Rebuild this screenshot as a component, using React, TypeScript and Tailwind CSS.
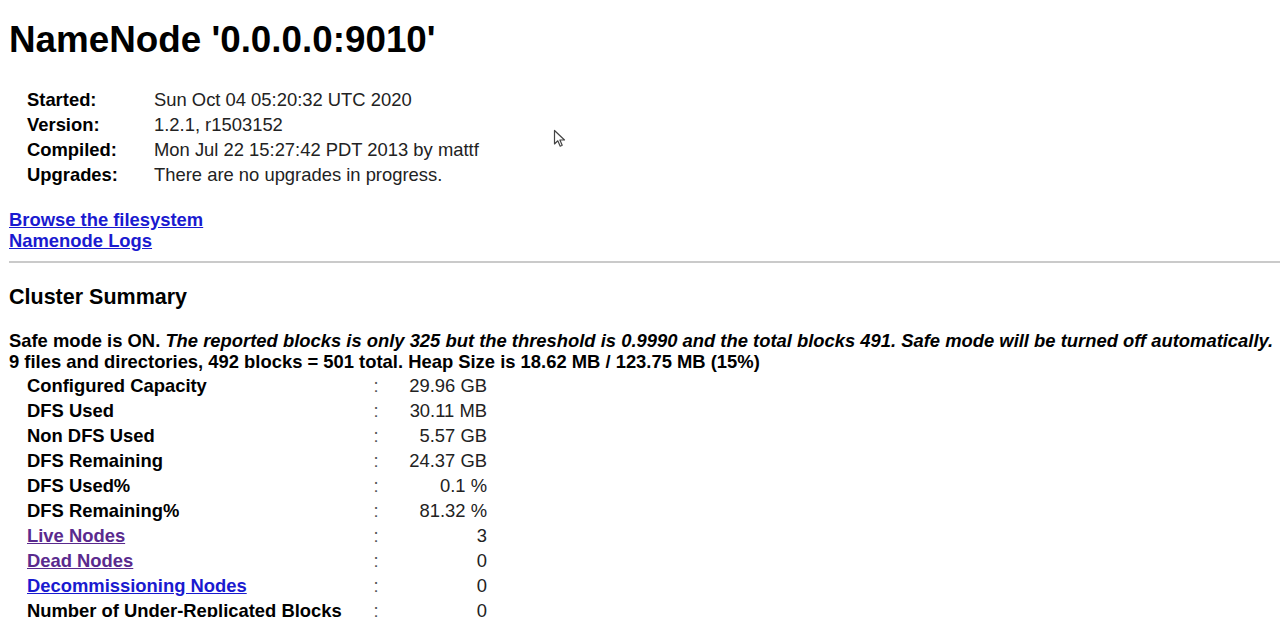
const info = [
  ["Started:", "Sun Oct 04 05:20:32 UTC 2020"],
  ["Version:", "1.2.1, r1503152"],
  ["Compiled:", "Mon Jul 22 15:27:42 PDT 2013 by mattf"],
  ["Upgrades:", "There are no upgrades in progress."],
];

type Row = { label: string; value: string; link?: "visited" | "new" };

const summary: Row[] = [
  { label: "Configured Capacity", value: "29.96 GB" },
  { label: "DFS Used", value: "30.11 MB" },
  { label: "Non DFS Used", value: "5.57 GB" },
  { label: "DFS Remaining", value: "24.37 GB" },
  { label: "DFS Used%", value: "0.1 %" },
  { label: "DFS Remaining%", value: "81.32 %" },
  { label: "Live Nodes", value: "3", link: "visited" },
  { label: "Dead Nodes", value: "0", link: "visited" },
  { label: "Decommissioning Nodes", value: "0", link: "new" },
  { label: "Number of Under-Replicated Blocks", value: "0" },
];

export default function App() {
  return (
    <div className="relative h-[617px] overflow-hidden bg-white pl-[9px] font-['Liberation_Sans',Arial,sans-serif] text-[18.4px] text-[#222]">
      <h1 className="pt-[19px] text-[36.8px] font-bold leading-[42px] text-black">NameNode '0.0.0.0:9010'</h1>

      <div className="mt-[26px] ml-[18px] leading-[25px]">
        {info.map(([k, v]) => (
          <div key={k} className="flex">
            <span className="w-[127px] font-bold text-black">{k}</span>
            <span>{v}</span>
          </div>
        ))}
      </div>

      <div className="mt-[22px] flex flex-col items-start font-bold leading-[21px]">
        <a href="#" className="text-[#1a1ad0] underline">Browse the filesystem</a>
        <a href="#" className="text-[#1a1ad0] underline">Namenode Logs</a>
      </div>

      <div className="mt-[10px] h-[2px] bg-[#cacaca]" />

      <h3 className="mt-[22px] text-[21.5px] font-bold leading-[25px] text-black">Cluster Summary</h3>

      <div className="mt-[20px] font-bold leading-[21px] text-black">
        <div className="whitespace-nowrap">
          Safe mode is ON.{" "}
          <em>The reported blocks is only 325 but the threshold is 0.9990 and the total blocks 491. Safe mode will be turned off automatically.</em>
        </div>
        <div className="whitespace-nowrap">9 files and directories, 492 blocks = 501 total. Heap Size is 18.62 MB / 123.75 MB (15%)</div>
      </div>

      <div className="mt-[1px] ml-[18px] leading-[25px]">
        {summary.map((r) => (
          <div key={r.label} className="flex">
            <span className="w-[343px] font-bold text-black">
              {r.link ? (
                <a href="#" className={r.link === "visited" ? "text-[#5a2a8e] underline" : "text-[#1a1ad0] underline"}>
                  {r.label}
                </a>
              ) : (
                r.label
              )}
            </span>
            <span className="w-[12px] text-center text-[#555]">:</span>
            <span className="w-[105px] text-right">{r.value}</span>
          </div>
        ))}
      </div>

      <svg className="absolute left-[553px] top-[129px]" width="14" height="20" viewBox="0 0 14 20">
        <path d="M1.5 1.5 L1.5 15 L4.8 11.8 L7.2 17.2 L9.2 16.3 L6.9 11 L11.5 11 Z" fill="white" stroke="#444" strokeWidth="1.2" strokeLinejoin="round" />
      </svg>
    </div>
  );
}
